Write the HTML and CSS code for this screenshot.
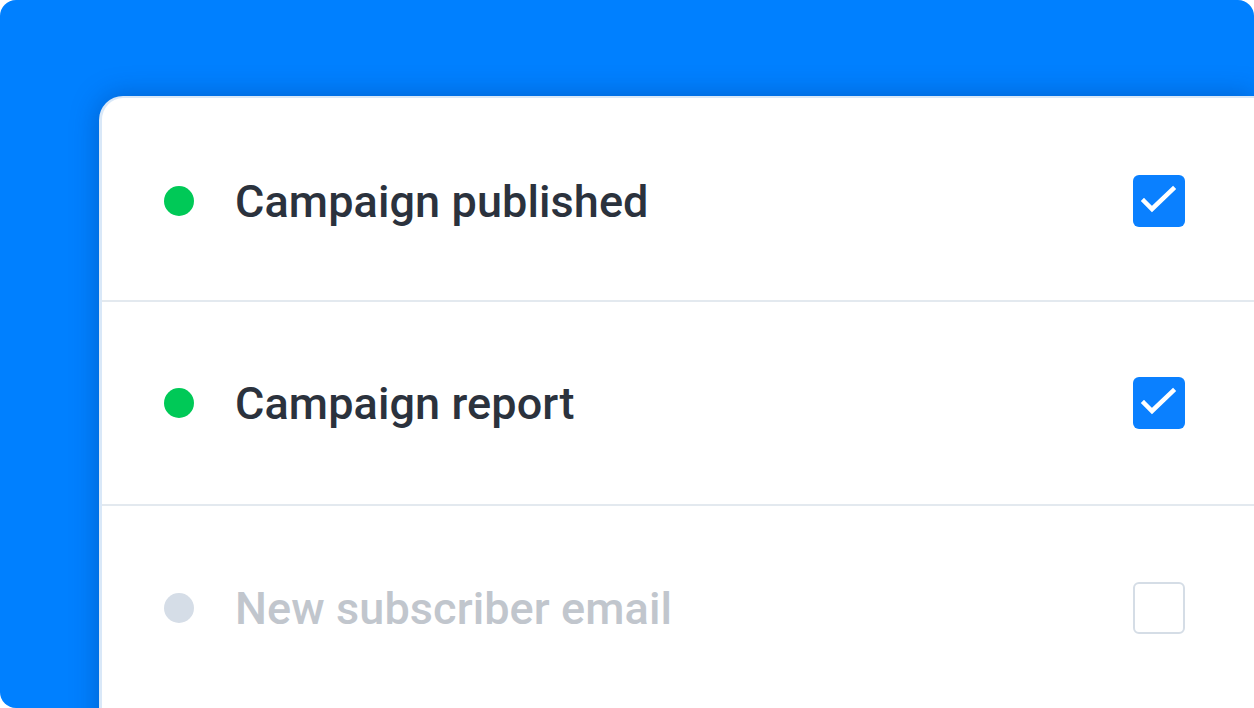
FILE: index.html
```html
<!DOCTYPE html>
<html lang="en">
<head>
    <meta charset="UTF-8">
    <title>Notifications</title>
    <link rel="stylesheet" href="styles.css">
</head>
<body>

<div class="frame">
    <div class="card">
        <div class="row">
            <span class="dot on"></span>
            <span class="label">Campaign published</span>
            <span class="box checked">
                <svg width="52" height="52" viewBox="0 0 52 52"><polyline points="11,26 19,34 40,14" fill="none" stroke="#fff" stroke-width="4.5" stroke-linecap="square"/></svg>
            </span>
        </div>
        <div class="row">
            <span class="dot on"></span>
            <span class="label">Campaign report</span>
            <span class="box checked">
                <svg width="52" height="52" viewBox="0 0 52 52"><polyline points="11,26 19,34 40,14" fill="none" stroke="#fff" stroke-width="4.5" stroke-linecap="square"/></svg>
            </span>
        </div>
        <div class="row off">
            <span class="dot"></span>
            <span class="label">New subscriber email</span>
            <span class="box"></span>
        </div>
    </div>
</div>

</body>
</html>
```
FILE: styles.css
```css
html, body {
    margin: 0;
    padding: 0;
    background: #ffffff;
}
.frame {
    width: 1254px;
    height: 708px;
    background-color: #0080ff;
    border-radius: 16px 16px 0 16px;
    overflow: hidden;
    padding: 96px 0 0 99px;
    box-sizing: border-box;
}
.card {
    background: #ffffff;
    border-top: 2px solid #d9e8f8;
    border-left: 3px solid #d9e8f8;
    border-top-left-radius: 24px;
    box-shadow: 0 0 28px rgba(0, 40, 110, 0.35);
    height: 700px;
    font-family: Roboto, "Liberation Sans", sans-serif;
}
.row {
    display: flex;
    align-items: center;
    height: 204px;
    padding: 0 69px 0 62px;
    border-bottom: 2px solid #e3e9ef;
    box-sizing: border-box;
}
.row:first-child {
    padding-top: 4px;
}
.row.off {
    border-bottom: none;
}
.dot {
    width: 30px;
    height: 30px;
    border-radius: 50%;
    background-color: #d5dde7;
    flex: none;
}
.dot.on {
    background-color: #00c957;
}
.label {
    margin-left: 41px;
    font-size: 45px;
    font-weight: 500;
    color: #2b323d;
    letter-spacing: 0.1px;
}
.off .label {
    color: #c1c6cd;
}
.box {
    margin-left: auto;
    width: 52px;
    height: 52px;
    border-radius: 6px;
    border: 2px solid #d5dde6;
    box-sizing: border-box;
    flex: none;
}
.box.checked {
    background-color: #0a80ff;
    border: none;
}
.box svg {
    display: block;
}
```
